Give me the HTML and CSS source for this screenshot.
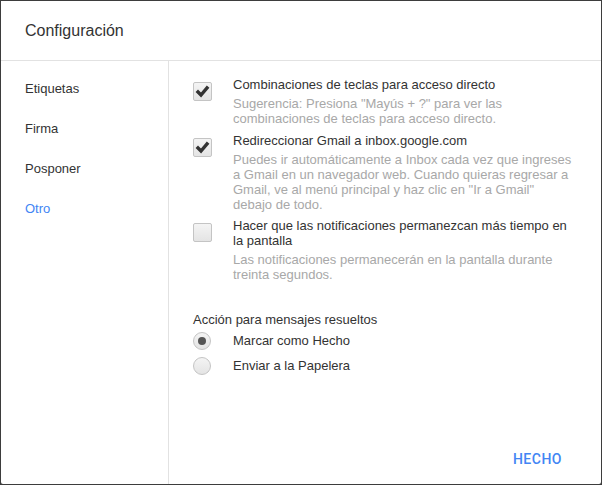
FILE: index.html
```html
<!DOCTYPE html>
<html lang="es">
<head>
<meta charset="utf-8">
<title>Configuración</title>
<link rel="stylesheet" href="styles.css">
</head>
<body>
<div class="dialog">
  <div class="header">Configuración</div>
  <div class="body">
    <nav class="sidebar">
      <div class="nav-item">Etiquetas</div>
      <div class="nav-item">Firma</div>
      <div class="nav-item">Posponer</div>
      <div class="nav-item active">Otro</div>
    </nav>
    <div class="main">
      <div class="option">
        <span class="check checked"><svg width="19" height="19" viewBox="0 0 19 19"><polyline points="5,10 8,13 14,6" fill="none" stroke="#333" stroke-width="3.4" stroke-linecap="square"/></svg></span>
        <div class="text">
          <div class="label">Combinaciones de teclas para acceso directo</div>
          <div class="desc">Sugerencia: Presiona "Mayús + ?" para ver las combinaciones de teclas para acceso directo.</div>
        </div>
      </div>
      <div class="option opt2">
        <span class="check checked"><svg width="19" height="19" viewBox="0 0 19 19"><polyline points="5,10 8,13 14,6" fill="none" stroke="#333" stroke-width="3.4" stroke-linecap="square"/></svg></span>
        <div class="text">
          <div class="label">Redireccionar Gmail a inbox.google.com</div>
          <div class="desc">Puedes ir automáticamente a Inbox cada vez que ingreses a Gmail en un navegador web. Cuando quieras regresar a Gmail, ve al menú principal y haz clic en "Ir a Gmail" debajo de todo.</div>
        </div>
      </div>
      <div class="option opt3">
        <span class="check"></span>
        <div class="text">
          <div class="label">Hacer que las notificaciones permanezcan más tiempo en la pantalla</div>
          <div class="desc">Las notificaciones permanecerán en la pantalla durante treinta segundos.</div>
        </div>
      </div>
      <div class="group-title">Acción para mensajes resueltos</div>
      <div class="radio-row first">
        <span class="radio selected"></span>
        <span class="radio-label">Marcar como Hecho</span>
      </div>
      <div class="radio-row">
        <span class="radio"></span>
        <span class="radio-label">Enviar a la Papelera</span>
      </div>
      <div class="footer">
        <span class="btn">HECHO</span>
      </div>
    </div>
  </div>
</div>
</body>
</html>
```
FILE: styles.css
```css
html, body {
  margin: 0;
  padding: 0;
}
body {
  background: #3d3d3d;
  width: 602px;
  height: 485px;
  overflow: hidden;
  font-family: "Liberation Sans", Arial, sans-serif;
  font-size: 13px;
  color: #333;
}
.dialog {
  margin: 1px;
  width: 600px;
  height: 483px;
  background: #fff;
  border-radius: 0 0 2px 2px;
  display: flex;
  flex-direction: column;
}
.header {
  height: 59px;
  border-bottom: 1px solid #e2e2e2;
  display: flex;
  align-items: center;
  padding-left: 24px;
  font-size: 16px;
  color: #333;
}
.body {
  flex: 1;
  display: flex;
}
.sidebar {
  width: 167px;
  border-right: 1px solid #e2e2e2;
  padding-top: 8px;
}
.nav-item {
  height: 40px;
  line-height: 40px;
  padding-left: 24px;
  color: #333;
}
.nav-item.active {
  color: #4285f4;
}
.main {
  flex: 1;
  display: flex;
  flex-direction: column;
  padding: 16px 25px 17px 24px;
}
.option {
  display: flex;
  gap: 21px;
}
.opt2 { margin-top: 7px; }
.opt3 { margin-top: 6px; }
.check {
  flex: none;
  width: 17px;
  height: 17px;
  margin-top: 5px;
  border: 1px solid #c4c4c4;
  border-radius: 2px;
  background: linear-gradient(#f4f4f4, #e4e4e4);
  position: relative;
}
.check svg {
  position: absolute;
  left: -1px;
  top: -1px;
}
.text {
  flex: 1;
}
.label {
  line-height: 15px;
  color: #333;
}
.desc {
  margin-top: 4px;
  line-height: 15px;
  color: #a8a8a8;
}
.group-title {
  margin-top: 30px;
  line-height: 15px;
  color: #333;
}
.radio-row {
  display: flex;
  align-items: center;
  gap: 22px;
  height: 15px;
  margin-top: 10px;
}
.radio-row.first {
  margin-top: 6px;
}
.radio {
  flex: none;
  width: 16px;
  height: 16px;
  border: 1px solid #c4c4c4;
  border-radius: 50%;
  background: linear-gradient(#f4f4f4, #e4e4e4);
  position: relative;
}
.radio.selected::after {
  content: "";
  position: absolute;
  left: 4px;
  top: 4px;
  width: 8px;
  height: 8px;
  border-radius: 50%;
  background: #555;
}
.radio-label {
  line-height: 15px;
}
.footer {
  margin-top: auto;
  display: flex;
  justify-content: flex-end;
  padding-right: 14px;
}
.btn {
  font-family: Roboto, "Liberation Sans", sans-serif;
  font-weight: 500;
  font-size: 14px;
  line-height: 16px;
  letter-spacing: 0.5px;
  color: #4285f4;
}
```
